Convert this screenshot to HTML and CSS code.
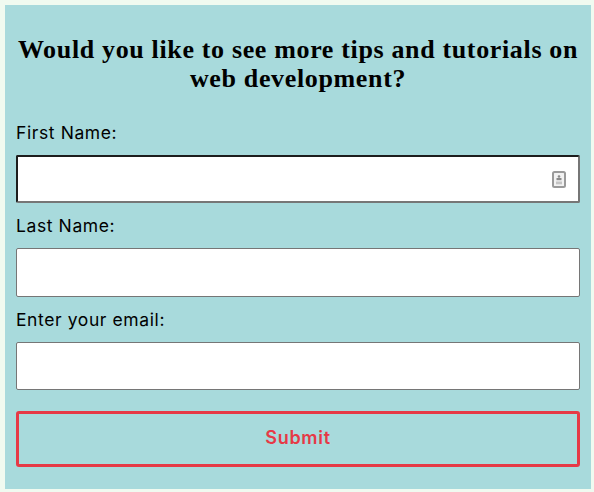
FILE: index.html
```html
<!DOCTYPE html>
<html lang="en">
<head>
    <meta charset="UTF-8">
    <meta name="viewport" content="width=device-width, initial-scale=1.0">
    <title>Newsletter Survey</title>
    <link rel="stylesheet" href="styles.css">
</head>
<body>
    <form class="survey-form">
        <h2>Would you like to see more tips and tutorials on web development?</h2>
        <label class="field-label" for="firstName">First Name:</label>
        <div class="input-wrap input-focused">
            <input type="text" id="firstName">
            <svg class="autofill-icon" width="14" height="17" viewBox="0 0 14 17" aria-hidden="true">
                <rect x="1" y="1" width="12" height="15" rx="1.5" fill="#f2f2f2" stroke="#9a9a9a" stroke-width="2"/>
                <circle cx="7" cy="5.5" r="1.3" fill="#8a8a8a"/>
                <rect x="4.5" y="7" width="5" height="2.2" fill="#8a8a8a"/>
                <rect x="4" y="10.5" width="6" height="2.8" fill="#c4c4c4"/>
            </svg>
        </div>
        <label class="field-label" for="lastName">Last Name:</label>
        <div class="input-wrap">
            <input type="text" id="lastName">
        </div>
        <label class="field-label" for="email">Enter your email:</label>
        <div class="input-wrap">
            <input type="email" id="email">
        </div>
        <button type="button" class="submit-btn">Submit</button>
    </form>
</body>
</html>
```

FILE: styles.css
```css
body {
    margin: 0;
    padding: 5px 3px 3px 5px;
    background: #f0faf0;
    font-family: "Inter", "Open Sans", sans-serif;
    color: #000;
}
.survey-form {
    height: 484px;
    box-sizing: border-box;
    padding: 30px 11px 0;
    background: #a8dadc;
    display: flex;
    flex-direction: column;
}
h2 {
    margin: 0 0 27px;
    font-family: "Liberation Serif", serif;
    font-size: 26px;
    line-height: 29px;
    letter-spacing: 0.65px;
    font-weight: bold;
    text-align: center;
}
.field-label {
    height: 24px;
    line-height: 26px;
    font-size: 17.5px;
    letter-spacing: 0.6px;
    margin-bottom: 11px;
}
.input-wrap {
    position: relative;
    margin-bottom: 10px;
}
.input-wrap input {
    display: block;
    width: 100%;
    height: 48.4px;
    box-sizing: border-box;
    background: #fff;
    border: 1px solid #767676;
    border-radius: 2px;
    padding: 0 10px;
}
.input-focused input {
    border-width: 2px;
    border-color: #1d1d1d #767676 #767676 #1d1d1d;
    outline: none;
}
.autofill-icon {
    position: absolute;
    right: 14px;
    top: 16px;
}
.submit-btn {
    margin-top: 10.8px;
    height: 56px;
    padding-bottom: 3px;
    background: transparent;
    border: 3px solid #e63946;
    border-radius: 3px;
    color: #e63946;
    font-family: inherit;
    font-size: 18px;
    letter-spacing: 0.7px;
    font-weight: 600;
}
```
